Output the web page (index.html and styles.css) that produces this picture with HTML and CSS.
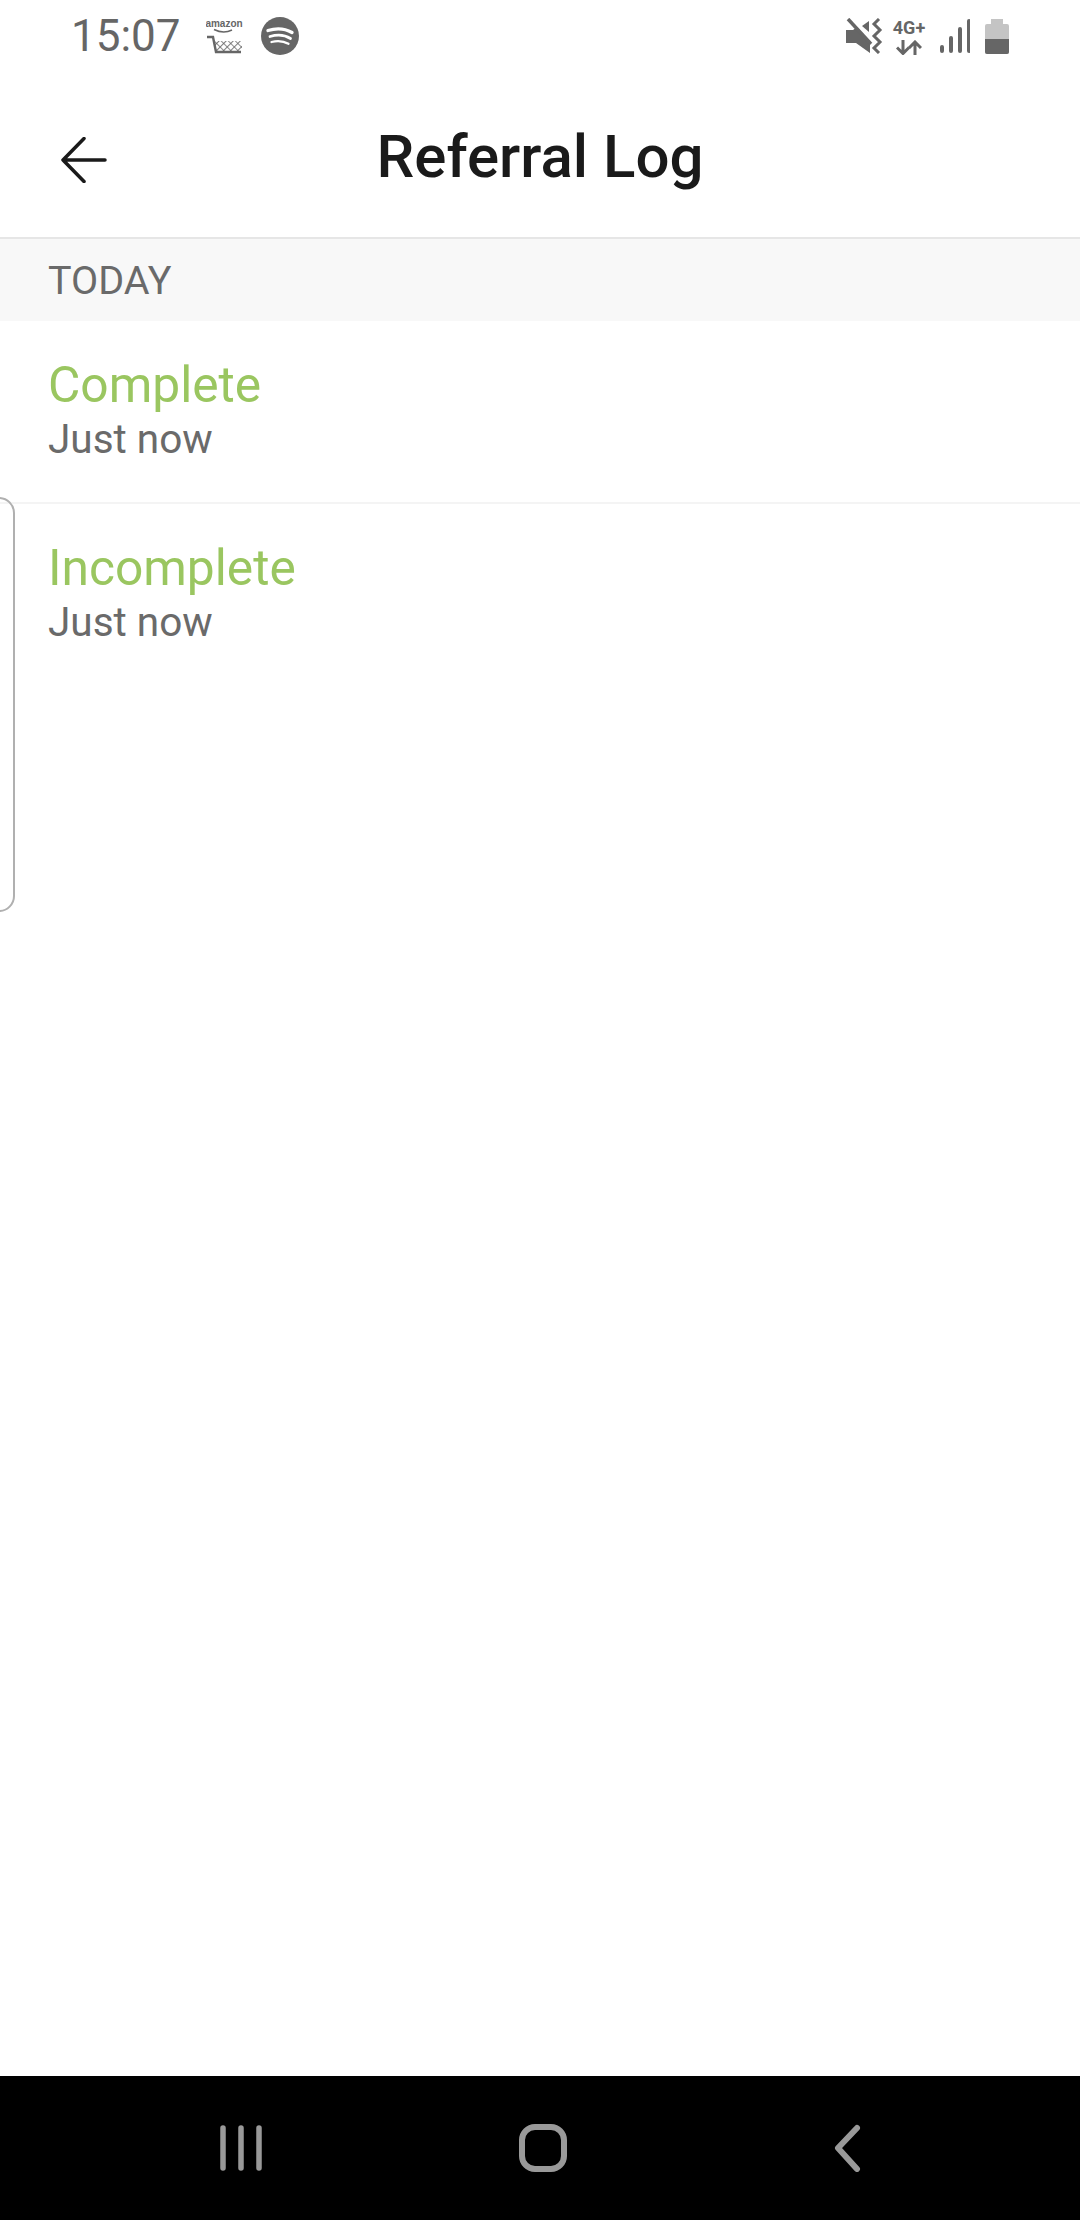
FILE: index.html
```html
<!DOCTYPE html>
<html lang="en">
<head>
  <meta charset="UTF-8">
  <meta name="viewport" content="width=device-width, initial-scale=1.0">
  <title>Referral Log</title>
  <link rel="stylesheet" href="styles.css">
</head>
<body>
  <div class="screen">
    <div class="status-bar">
      <div class="status-left">
        <span class="clock">15:07</span>
        <svg class="icon-amazon" width="38" height="36" viewBox="0 0 38 36">
          <defs>
            <pattern id="cart-mesh" width="5" height="5" patternUnits="userSpaceOnUse" patternTransform="rotate(45)">
              <path d="M0 0H5M0 0V5" stroke="#666" stroke-width="1.700" fill="none"/>
            </pattern>
          </defs>
          <text x="18" y="9" class="amazon-word" text-anchor="middle">amazon</text>
          <path d="M8 11.500c6 3 13 3 18 .5" stroke="#666" stroke-width="1.400" fill="none"/>
          <path d="M1 19h6l3 15h25" stroke="#666" stroke-width="2.400" fill="none"/>
          <rect x="9" y="23" width="27" height="11" fill="url(#cart-mesh)"/>
        </svg>
        <svg class="icon-spotify" width="38" height="38" viewBox="0 0 38 38">
          <circle cx="19" cy="19" r="19" fill="#666"/>
          <path d="M7 13.500c8-2.500 17-2 24 2" stroke="#fff" stroke-width="3.400" stroke-linecap="round" fill="none"/>
          <path d="M9 19.500c7-2 15-1.500 20.500 2" stroke="#fff" stroke-width="2.800" stroke-linecap="round" fill="none"/>
          <path d="M10.500 25c6-1.500 12-1 17 1.800" stroke="#fff" stroke-width="2.300" stroke-linecap="round" fill="none"/>
        </svg>
      </div>
      <div class="status-right">
        <svg width="37" height="36" viewBox="0 0 37 36">
          <path d="M0 12h7l4-3 13 14v12L10 25H0z" fill="#666"/>
          <path d="M2 1l23 25" stroke="#666" stroke-width="3.500"/>
          <path d="M23 3v11l-7-6z" fill="#666"/>
          <path d="M33 1l-5 5 6 6-6 6 6 6-6 6 5 5" stroke="#666" stroke-width="3" fill="none"/>
        </svg>
        <div class="net">
          <span class="net-label">4G+</span>
          <svg width="26" height="15" viewBox="0 0 26 15">
            <path d="M7 0v13M1 7.500l6 6 6-6" stroke="#666" stroke-width="3" fill="none"/>
            <path d="M19 15V2M13 8l6-6 6 6" stroke="#666" stroke-width="3" fill="none"/>
          </svg>
        </div>
        <svg width="31" height="35" viewBox="0 0 31 35" class="signal">
          <g stroke="#666" stroke-width="4" stroke-linecap="round">
            <path d="M3 28v4M12 19v13M21 10v22M30 2v30"/>
          </g>
        </svg>
        <div class="battery">
          <div class="battery-nub"></div>
          <div class="battery-body">
            <div class="battery-level"></div>
          </div>
        </div>
      </div>
    </div>

    <header class="app-header">
      <button class="back-button">
        <svg width="48" height="46" viewBox="0 0 48 46">
          <path d="M24 1.500L3 23l21 21.500M3 23h42" stroke="#1a1a1a" stroke-width="3.500" stroke-linecap="round" stroke-linejoin="round" fill="none"/>
        </svg>
      </button>
      <h1>Referral Log</h1>
    </header>

    <main class="log">
      <div class="section-title">TODAY</div>
      <div class="log-item">
        <div class="log-name">Complete</div>
        <div class="log-time">Just now</div>
      </div>
      <div class="log-item">
        <div class="log-name">Incomplete</div>
        <div class="log-time">Just now</div>
      </div>
    </main>

    <div class="edge-handle"></div>

    <nav class="nav-bar">
      <svg width="46" height="46" viewBox="0 0 46 46">
        <path d="M5 3v40M23 3v40M41 3v40" stroke="#999" stroke-width="5.500" stroke-linecap="round"/>
      </svg>
      <div class="nav-home"></div>
      <svg class="nav-back" width="30" height="48" viewBox="0 0 30 48">
        <path d="M24 4L5 24l19 21" stroke="#999" stroke-width="6" stroke-linecap="round" stroke-linejoin="round" fill="none"/>
      </svg>
    </nav>
  </div>
</body>
</html>
```

FILE: styles.css
```css
* {
  box-sizing: border-box;
  margin: 0;
  padding: 0;
}

body {
  font-family: Roboto, "Liberation Sans", sans-serif;
  background-color: #fff;
}

.screen {
  position: relative;
  display: flex;
  flex-direction: column;
  width: 1080px;
  height: 2220px;
  overflow: hidden;
}

/* status bar */
.status-bar {
  display: flex;
  justify-content: space-between;
  align-items: center;
  height: 72px;
  padding: 0 71px 0 71px;
  color: #666;
}

.status-left {
  display: flex;
  align-items: center;
}

.clock {
  font-size: 44px;
  width: 135px;
}

.icon-amazon {
  margin-right: 17px;
}

.amazon-word {
  font-family: "Liberation Sans", sans-serif;
  font-size: 10px;
  font-weight: bold;
  fill: #666;
}

.status-right {
  display: flex;
  align-items: center;
}

.net {
  display: flex;
  flex-direction: column;
  align-items: center;
  width: 36px;
  margin: 0 12px 0 8px;
}

.net-label {
  font-size: 18px;
  font-weight: 700;
  line-height: 19px;
  margin-bottom: 3px;
}

.signal {
  margin-right: 15px;
}

.battery {
  display: flex;
  flex-direction: column;
  align-items: center;
  width: 24px;
}

.battery-nub {
  width: 12px;
  height: 5px;
  background-color: #c4c4c4;
}

.battery-body {
  display: flex;
  flex-direction: column;
  justify-content: flex-end;
  width: 24px;
  height: 30px;
  background-color: #c4c4c4;
  border-radius: 2px;
  overflow: hidden;
}

.battery-level {
  height: 15px;
  background-color: #666;
}

/* header */
.app-header {
  display: flex;
  justify-content: center;
  align-items: center;
  position: relative;
  height: 167px;
  padding-top: 4px;
  border-bottom: 2px solid #e6e6e6;
}

.app-header h1 {
  font-size: 60px;
  font-weight: 500;
  color: #1a1a1a;
}

.back-button {
  position: absolute;
  left: 60px;
  top: 65px;
  display: flex;
  border: none;
  background: none;
}

/* list */
.log {
  flex: 1;
}

.section-title {
  height: 82px;
  padding-left: 48px;
  padding-top: 1px;
  line-height: 82px;
  font-size: 39.500px;
  color: #6a6a6a;
  background-color: #f8f8f8;
}

.log-item {
  height: 183px;
  padding: 35px 48px 0;
  border-bottom: 2px solid #f4f4f4;
}

.log-item:last-child {
  border-bottom: none;
}

.log-name {
  font-size: 49.700px;
  line-height: 58px;
  color: #9ac660;
}

.log-time {
  font-size: 40.500px;
  line-height: 50px;
  color: #6a6a6a;
}

.edge-handle {
  position: absolute;
  left: -20px;
  top: 497px;
  width: 35px;
  height: 415px;
  border: 2px solid #b0b0b0;
  border-radius: 16px;
}

/* nav bar */
.nav-bar {
  display: flex;
  justify-content: space-between;
  align-items: center;
  height: 144px;
  padding: 0 217px 0 218px;
  background-color: #000;
}

.nav-home {
  width: 48px;
  height: 48px;
  margin-right: 11px;
  border: 6px solid #999;
  border-radius: 16px;
}

.nav-back {
  margin-right: 0;
}
```
